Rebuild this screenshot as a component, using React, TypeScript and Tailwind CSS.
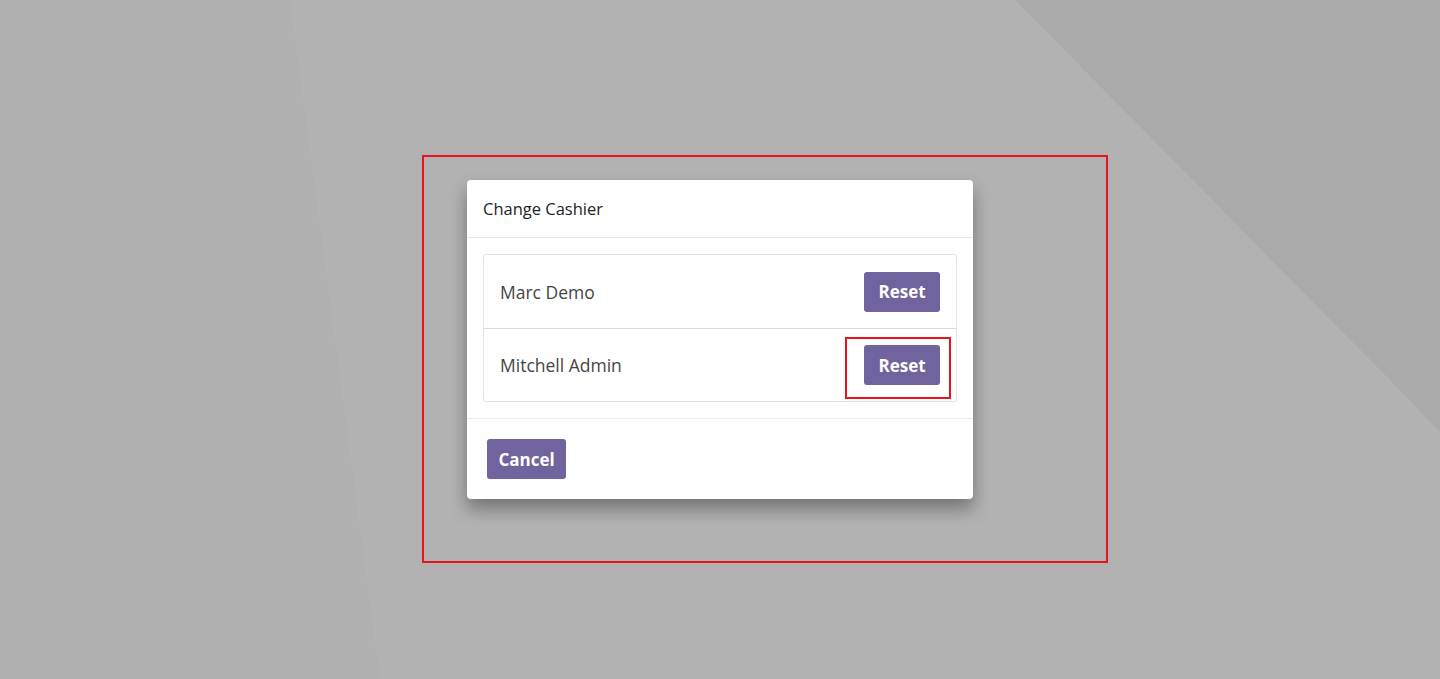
const FONT = "font-['Open_Sans','Noto_Sans',sans-serif]";

const cashiers = ["Marc Demo", "Mitchell Admin"];

function PurpleButton({ label, className = "" }: { label: string; className?: string }) {
  return (
    <button
      className={`flex h-10 items-center justify-center rounded-[3px] bg-[#71639e] pt-px text-[17px] font-bold text-white ${className}`}
    >
      {label}
    </button>
  );
}

export default function App() {
  return (
    <div className={`relative flex h-[679px] w-full items-center justify-center overflow-hidden bg-[#b2b2b2] ${FONT}`}>
      {/* backdrop facets */}
      <svg className="absolute inset-0 h-full w-full" viewBox="0 0 1440 679" preserveAspectRatio="none">
        <polygon points="0,0 290,0 380,679 0,679" fill="#b0b0b0" />
        <polygon points="1015,0 1440,0 1440,432 1390,380" fill="#aaaaaa" />
      </svg>

      <div className="relative w-[506px] rounded-[4px] bg-white shadow-[0_10px_18px_rgba(0,0,0,0.35)]">
        <div className="flex h-[58px] items-center border-b border-[#e6e6e6] px-4 pt-px text-[16.5px] text-[#212529]">
          Change Cashier
        </div>
        <div className="p-4">
          <div className="rounded-[3px] border border-[#e2e2e2]">
            {cashiers.map((name, i) => (
              <div
                key={name}
                className={`flex h-[73px] items-center justify-between px-4 ${i > 0 ? "border-t border-[#dcdcdc]" : ""}`}
              >
                <span className="pt-px text-[17.5px] text-[#454545]">{name}</span>
                <PurpleButton label="Reset" className="w-[76px]" />
              </div>
            ))}
          </div>
        </div>
        <div className="border-t border-[#ececec] p-5">
          <PurpleButton label="Cancel" className="w-[79px]" />
        </div>
      </div>

      {/* annotation boxes */}
      <div className="absolute left-[422px] top-[155px] h-[408px] w-[686px] border-2 border-[#e8141b]" />
      <div className="absolute left-[845px] top-[337px] h-[62px] w-[106px] border-2 border-[#e8141b]" />
    </div>
  );
}
